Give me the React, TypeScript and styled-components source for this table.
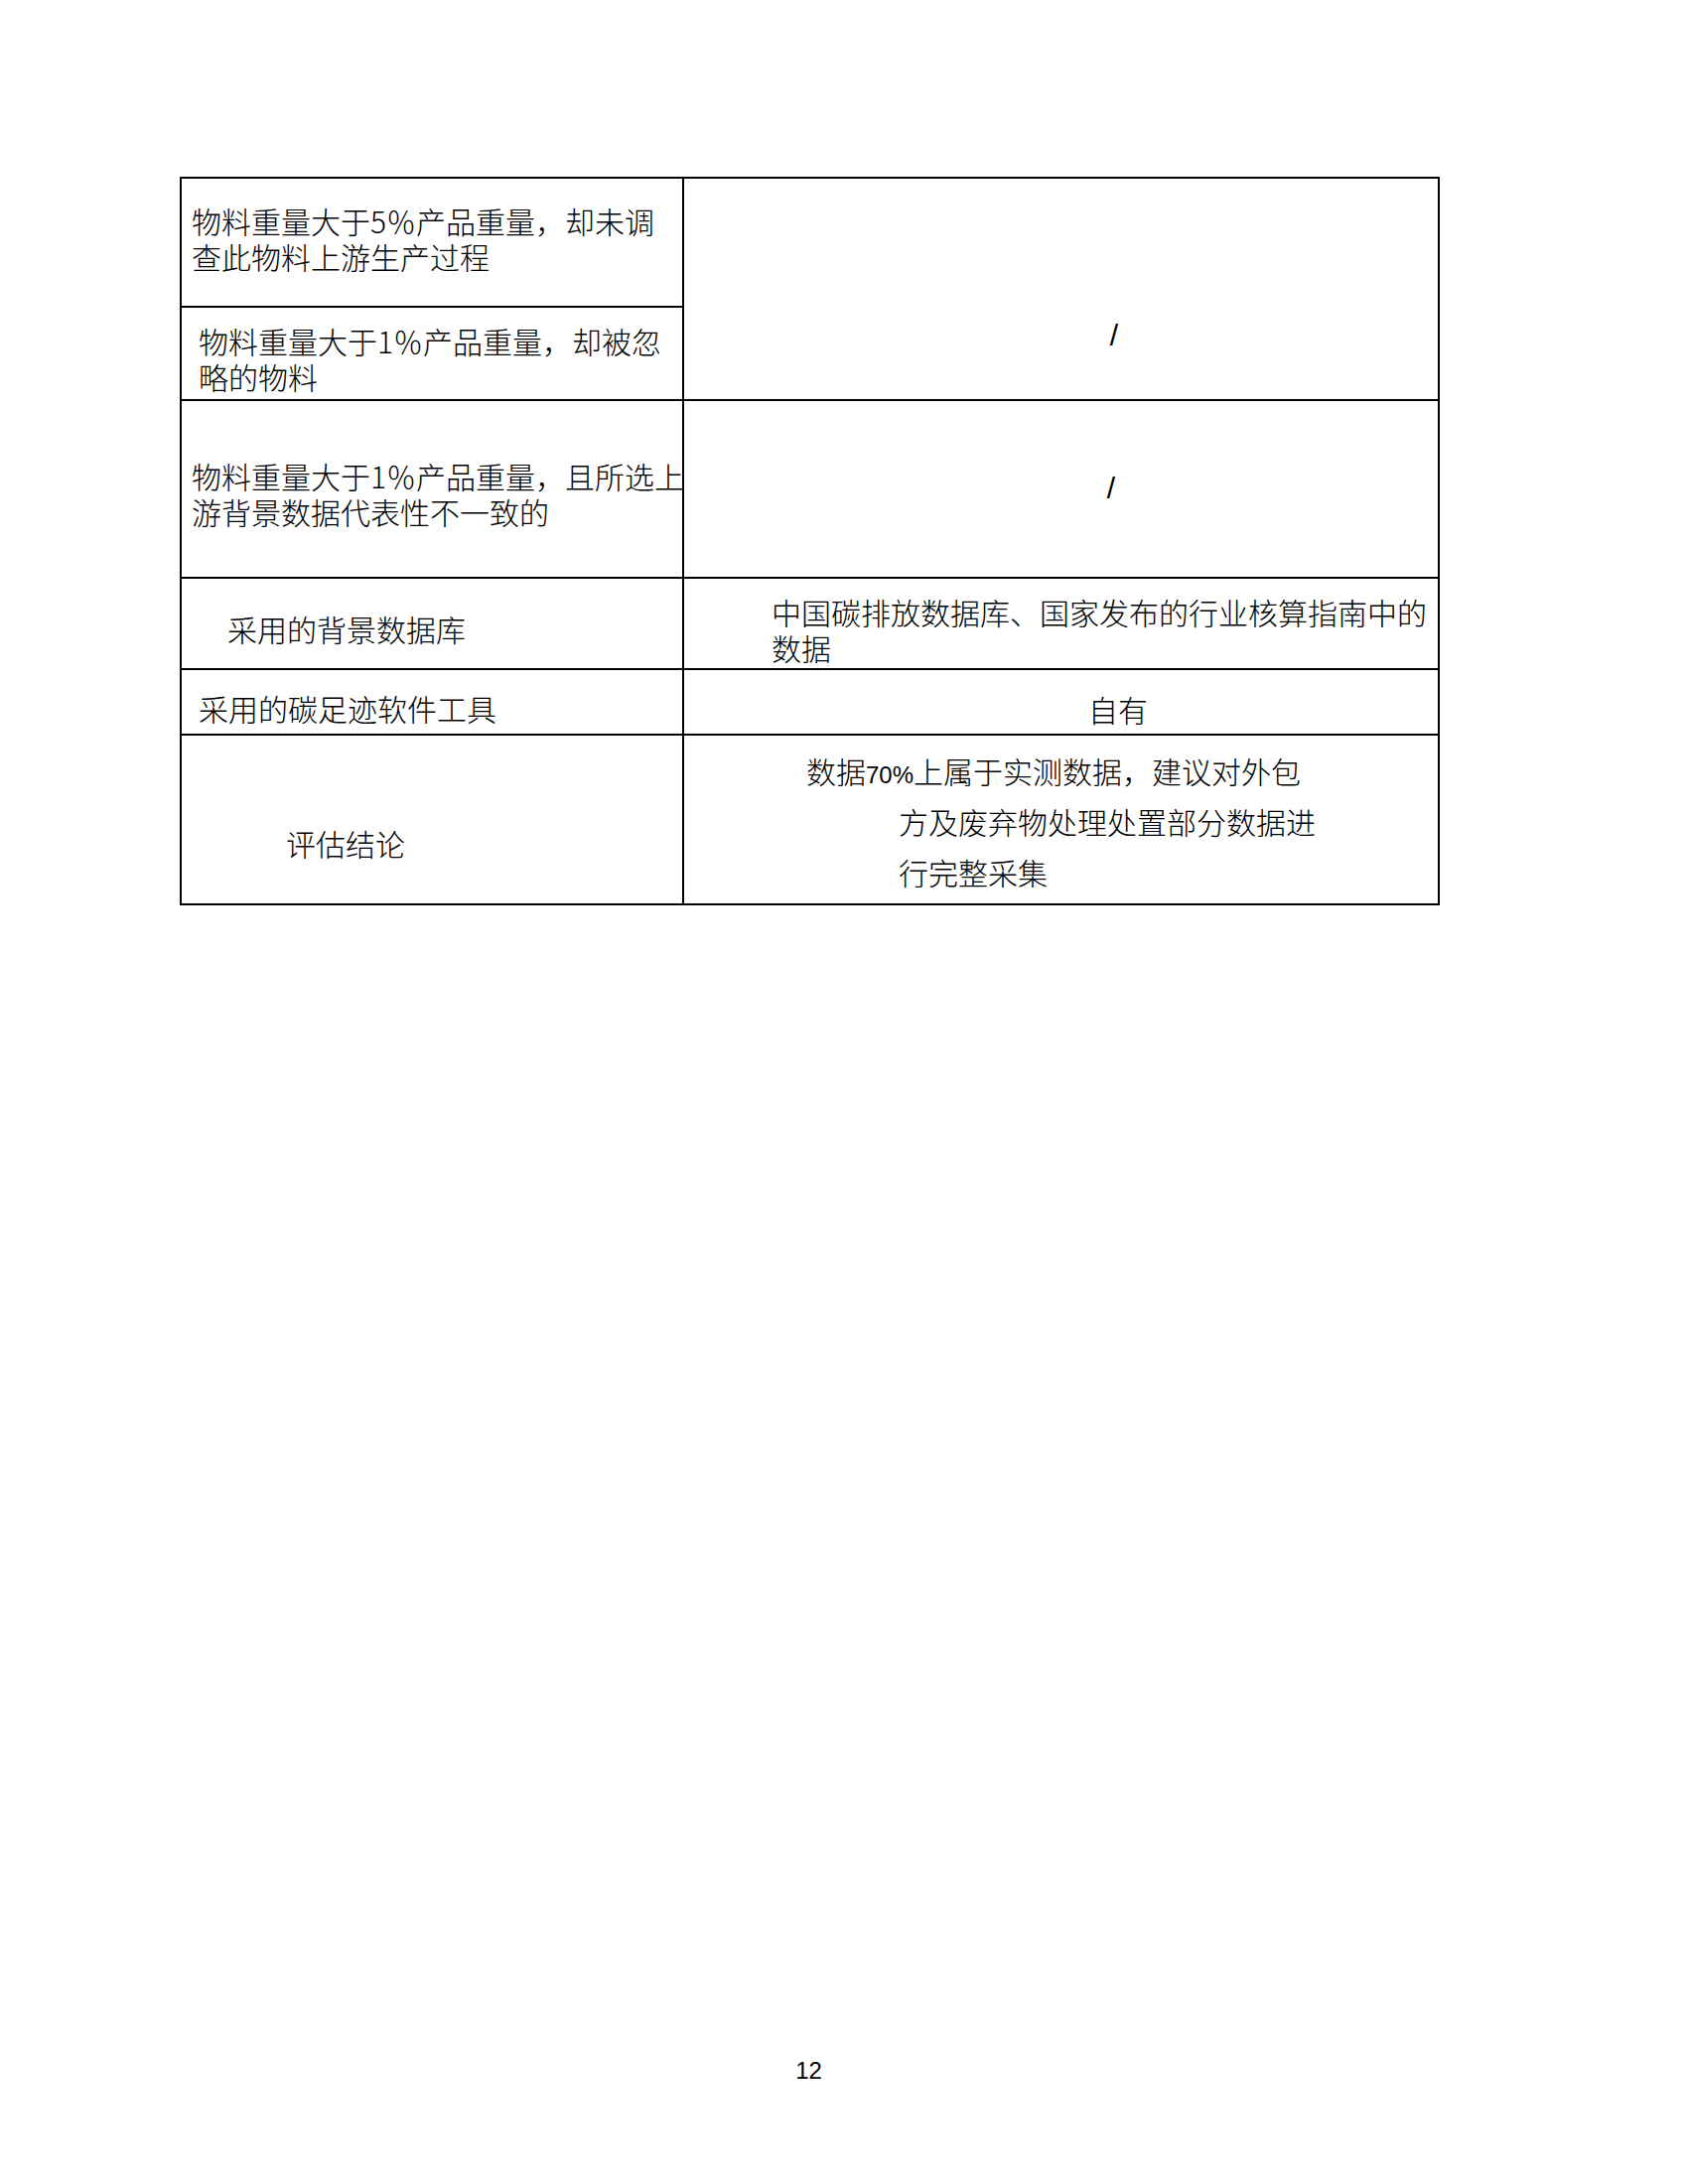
import React from 'react';
import styled, { createGlobalStyle } from 'styled-components';

const GlobalStyle = createGlobalStyle`
  html, body {
    margin: 0;
    padding: 0;
    background: #fff;
  }

  body {
    font-family: "Noto Sans CJK SC", "Liberation Sans", sans-serif;
    color: #000;
  }
`;

const Page = styled.div`
  width: 1700px;
  height: 2200px;
  box-sizing: border-box;
  padding: 178px 252px 100px 181px;
  display: flex;
  flex-direction: column;
`;

const Table = styled.table`
  width: 1267px;
  border-collapse: collapse;
  table-layout: fixed;
`;

const Row = styled.tr<{ $h: number }>`
  height: ${(p) => p.$h}px;
`;

const Cell = styled.td<{ $pt: number; $pl: number; $center?: boolean; $lh?: number }>`
  border: 2px solid #000;
  vertical-align: top;
  padding: ${(p) => p.$pt}px 0 0 ${(p) => p.$pl}px;
  text-align: ${(p) => (p.$center ? 'center' : 'left')};
  font-size: 30px;
  font-weight: 300;
  line-height: ${(p) => p.$lh ?? 36}px;
  white-space: nowrap;
  overflow: visible;
`;

const Hanging = styled.div<{ $indent: number }>`
  text-indent: -${(p) => p.$indent}px;
`;

const Slash = styled.span`
  font-family: "Liberation Sans", sans-serif;
  font-size: 30px;
  line-height: 1;
`;

const Small = styled.span`
  font-family: "Liberation Sans", sans-serif;
  font-size: 24px;
  line-height: 1;
`;

const Footer = styled.div`
  margin-top: auto;
  width: 1267px;
  text-align: center;
  font-family: "Liberation Sans", sans-serif;
  font-size: 24px;
  line-height: 28px;
`;

const App = () => (
  <>
    <GlobalStyle />
    <Page>
      <Table>
        <colgroup>
          <col style={{ width: 506 }} />
          <col style={{ width: 761 }} />
        </colgroup>
        <tbody>
          <Row $h={130}>
            <Cell $pt={24} $pl={10}>
              物料重量大于5％产品重量，却未调
              <br />
              查此物料上游生产过程
            </Cell>
            <Cell rowSpan={2} $pt={137} $pl={107} $center>
              <Slash>/</Slash>
            </Cell>
          </Row>
          <Row $h={94}>
            <Cell $pt={15} $pl={17}>
              物料重量大于1％产品重量，却被忽
              <br />
              略的物料
            </Cell>
          </Row>
          <Row $h={179}>
            <Cell $pt={57} $pl={10}>
              物料重量大于1％产品重量，且所选上
              <br />
              游背景数据代表性不一致的
            </Cell>
            <Cell $pt={67} $pl={101} $center>
              <Slash>/</Slash>
            </Cell>
          </Row>
          <Row $h={92}>
            <Cell $pt={32} $pl={46}>采用的背景数据库</Cell>
            <Cell $pt={15} $pl={88}>
              中国碳排放数据库、国家发布的行业核算指南中的
              <br />
              数据
            </Cell>
          </Row>
          <Row $h={66}>
            <Cell $pt={20} $pl={17}>采用的碳足迹软件工具</Cell>
            <Cell $pt={21} $pl={115} $center>自有</Cell>
          </Row>
          <Row $h={171}>
            <Cell $pt={90} $pl={105}>评估结论</Cell>
            <Cell $pt={10} $pl={216} $lh={51}>
              <Hanging $indent={93}>
                数据<Small>70%</Small>上属于实测数据，建议对外包
                <br />
                方及废弃物处理处置部分数据进
                <br />
                行完整采集
              </Hanging>
            </Cell>
          </Row>
        </tbody>
      </Table>
      <Footer>12</Footer>
    </Page>
  </>
);

export default App;
